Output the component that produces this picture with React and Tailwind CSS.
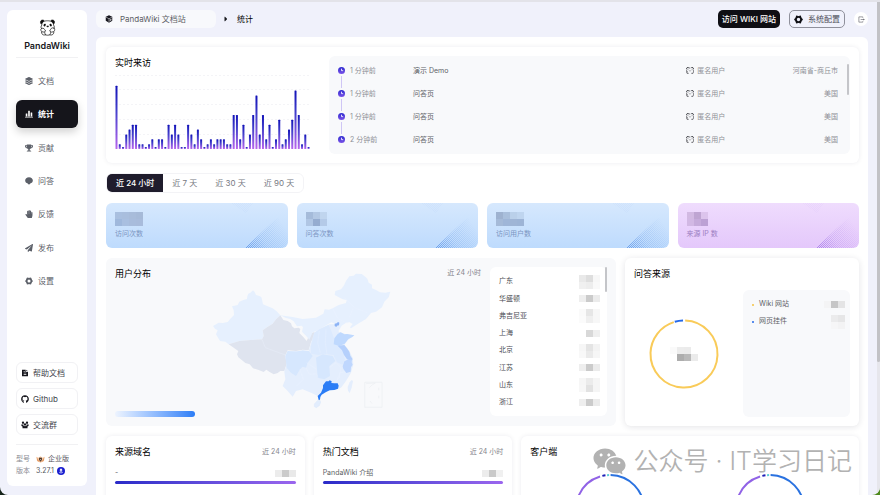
import clsx from 'clsx'
import {
  FaLayerGroup,
  FaTrophy,
  FaHandPaper,
  FaPaperPlane,
  FaGithub,
  FaCaretRight,
} from 'react-icons/fa'
import { RiFileTextFill, RiWechatFill } from 'react-icons/ri'

function StatsIcon({ className }) {
  return (
    <svg viewBox="0 0 16 16" className={className} fill="currentColor">
      <rect x="1.5" y="7" width="3.2" height="6" rx="0.6" />
      <rect x="6.4" y="1.5" width="3.2" height="11.5" rx="0.6" />
      <rect x="11.3" y="5" width="3.2" height="8" rx="0.6" />
      <rect x="0" y="13.6" width="16" height="1.6" rx="0.8" />
    </svg>
  )
}

function BubbleIcon({ className }) {
  return (
    <svg viewBox="0 0 16 16" className={className} fill="currentColor">
      <path d="M8 0.500c4.500 0 7.700 2.700 7.700 6.500 0 3-2.200 5.300-5.200 6L8 15.700 5.500 13C2.500 12.300.3 10 .3 7 .3 3.200 3.500.5 8 .5z" />
    </svg>
  )
}

function GearIcon({ className }) {
  return (
    <svg viewBox="0 0 24 24" className={className} fill="none" stroke="currentColor">
      <circle cx="12" cy="12" r="7" strokeWidth="5" />
      <g fill="currentColor" stroke="none">
        <circle cx="21" cy="12" r="2.600" />
        <circle cx="3" cy="12" r="2.600" />
        <circle cx="16.500" cy="19.800" r="2.600" />
        <circle cx="7.500" cy="19.800" r="2.600" />
        <circle cx="16.500" cy="4.200" r="2.600" />
        <circle cx="7.500" cy="4.200" r="2.600" />
      </g>
    </svg>
  )
}

function ExitIcon({ className }) {
  return (
    <svg viewBox="0 0 16 16" className={className} fill="none" stroke="currentColor" strokeWidth="1.500">
      <path d="M11 4V2H2v12h9v-2" />
      <path d="M6 8h8" />
      <path d="M12 5.500L15.500 8 12 10.500z" fill="currentColor" stroke="none" />
    </svg>
  )
}

function PandaIcon({ className }) {
  return (
    <svg viewBox="0 0 48 48" className={className} fill="none" stroke="#111" strokeWidth="2">
      <path d="M8 17C7 9 14 5 24 5s18 4 17 12c3 4 3 8 0 11" />
      <path d="M8 17c-3 4-3 8 0 11" />
      <path d="M5 13C2 6 7 1 14 4l-2 4c-3 1-4 4-5 6zM43 12c3-7-3-11-9-8l2 4c3 1 4 3 5 6z" fill="#111" />
      <ellipse cx="16" cy="17" rx="3" ry="4" transform="rotate(30 16 17)" fill="#111" stroke="none" />
      <ellipse cx="33" cy="17" rx="3" ry="4" transform="rotate(-30 33 17)" fill="#111" stroke="none" />
      <path d="M22 20h5l-2.500 3z" fill="#111" />
      <path d="M5 29c3-4 9-4 11 1l3 4-5 3-6-1c-2-2-3-4-3-7zM44 27c-3-3-9-3-11 2l-3 5 5 3 6-1c3-2 4-5 3-9z" />
      <path d="M7 36c0 5 2 8 6 9h6c-2-3-3-5-3-8M42 35c0 6-2 9-6 10h-6c2-3 3-5 3-8M19 45c3 1 8 1 11 0" />
    </svg>
  )
}

function VisitorIcon({ className }) {
  return (
    <svg viewBox="0 0 24 21" className={className} fill="none" stroke="#33343a" strokeWidth="2">
      <path d="M2 6C1 2 5 0 8 2M22 6c1-4-3-6-6-4" strokeWidth="3" />
      <path d="M8 3h5M3 7c-2 4-2 8 0 12h5M21 7c2 4 2 8 0 12h-5" />
      <path d="M7 8l2 2M17 8l-2 2M11 12h2M3 14l3 1" />
    </svg>
  )
}

function CubeIcon({ className }) {
  return (
    <svg viewBox="0 0 16 16" className={className}>
      <path d="M8 0.500l6.500 3.200v8L8 15.500l-6.500-3.800v-8z" fill="#16161d" />
      <path d="M8 7.500v7.500M8 7.500L2 4.300M8 7.500l6-3.200" stroke="#fff" strokeWidth="1" />
      <path d="M9.500 9l3.500-1.800v3.500L9.500 12.600z" fill="#fff" opacity="0.7" />
    </svg>
  )
}

function GroupIcon({ className }) {
  return (
    <svg viewBox="0 0 16 16" className={className} fill="#16161d">
      <circle cx="4" cy="3.500" r="2.300" />
      <circle cx="12" cy="3.500" r="2.300" />
      <circle cx="8" cy="6.800" r="2.400" />
      <path d="M0.500 7h3.800c0 2 1.500 3.500 3.700 3.500S11.700 9 11.700 7h3.800c0 2.500-1 3.500-2.500 4v3.500H3V11C1.500 10.500.5 9.500.5 7z" />
    </svg>
  )
}

function CrownIcon({ className }) {
  return (
    <svg viewBox="0 0 27 21" className={className}>
      <path d="M1 2l7 3 5.500-4L19 5l7-3-2 13-10.500 5L3 15z" fill="#f6c9a4" />
      <path d="M2 4l7 10 3 4-8-3z" fill="#e39a63" />
      <path d="M25 4l-7 10-3 4 8-3z" fill="#e39a63" />
      <path d="M9 5.500h9v6L13.500 17 9 11.500z" fill="#3b2417" />
      <path d="M11.500 8l2 4.500 2-4.500" stroke="#fff" strokeWidth="1.500" fill="none" />
    </svg>
  )
}

function UpdateIcon({ className }) {
  return (
    <svg viewBox="0 0 22 22" className={className}>
      <circle cx="11" cy="11" r="11" fill="#1a1fd0" />
      <path d="M11 3.500l4.500 5.500h-2.500v4h-4V9H6.500z" fill="#fff" />
      <path d="M6 14c2 3 8 3 10 0" stroke="#fff" strokeWidth="2" fill="none" />
    </svg>
  )
}

function ClockIcon({ className }) {
  return (
    <svg viewBox="0 0 21 21" className={className}>
      <defs>
        <linearGradient id="clock" x1="0" y1="0" x2="0" y2="1">
          <stop offset="0" stopColor="#2f2cd0" />
          <stop offset="1" stopColor="#7a52e8" />
        </linearGradient>
      </defs>
      <circle cx="10.500" cy="10.500" r="10.500" fill="url(#clock)" />
      <path d="M10.500 5v6h5" stroke="#fff" strokeWidth="2.500" fill="none" />
    </svg>
  )
}

const NAV = [
  { label: '文档', icon: FaLayerGroup },
  { label: '统计', icon: StatsIcon, active: true },
  { label: '贡献', icon: FaTrophy },
  { label: '问答', icon: BubbleIcon },
  { label: '反馈', icon: FaHandPaper },
  { label: '发布', icon: FaPaperPlane },
  { label: '设置', icon: GearIcon },
]

const LINKS = [
  { label: '帮助文档', icon: RiFileTextFill },
  { label: 'Github', icon: FaGithub },
  { label: '交流群', icon: GroupIcon },
]

const VISITS = [
  { time: '1 分钟前', page: '演示 Demo', place: '河南省-商丘市' },
  { time: '1 分钟前', page: '问答页', place: '美国' },
  { time: '1 分钟前', page: '问答页', place: '美国' },
  { time: '2 分钟前', page: '问答页', place: '美国' },
]

const TRAFFIC = [
  13, 1, 0, 3, 4, 5, 5, 1, 1, 0, 1, 2, 0, 2, 2, 0, 5, 3, 5, 3, 0, 0, 5, 3, 1, 4, 2, 0, 1, 2,
  1, 2, 2, 2, 1, 1, 7, 7, 2, 5, 0, 3, 7, 11, 3, 7, 2, 5, 0, 2, 6, 1, 2, 4, 6, 12, 7, 1, 3, 0,
]

const WIDE = [['#e9e9e9', '#dedede', '#f7f7f7'], ['#f0f0f0', '#ededed', '#f9f9f9']]
const SLIM = [['#eeeeee', '#cbcbcb', '#ebebeb']]
const TALL = [['#fafafa', '#e6e6e6', '#f7f7f7'], ['#fbfbfb', '#efefef', '#f7f7f7']]

const REGIONS = [
  { name: '广东', mask: WIDE },
  { name: '华盛顿', mask: SLIM },
  { name: '弗吉尼亚', mask: TALL },
  { name: '上海', mask: [['#ffffff', '#d8d8d8', '#efefef']] },
  { name: '北京', mask: [['#f6f6f6', '#e4e4e4', '#f3f3f3'], ['#f8f8f8', '#eaeaea', '#f6f6f6']] },
  { name: '江苏', mask: SLIM },
  { name: '山东', mask: [['#f6f6f6', '#ebebeb', '#f5f5f5'], ['#f7f7f7', '#e2e2e2', '#f5f5f5']] },
  { name: '浙江', mask: SLIM },
]

const STATS = [
  {
    label: '访问次数',
    mask: [['#a9bfdf', '#a9bedd', '#a8bcda', '#a6bad8'], ['#9fb8dc', '#a9bfe0', '#a8bcdc', '#a8bbdb']],
  },
  {
    label: '问答次数',
    mask: [['#a5bbda', '#b3c8e4', '#c0d5ee'], ['#b0c6e4', '#95acd0', '#b4cae8']],
  },
  {
    label: '访问用户数',
    mask: [['#9eb2d0', '#a9bfdc', '#bad0ea', '#bfd5ef'], ['#a5bad8', '#9fb6d8', '#9fb5d6', '#9db4d6']],
  },
  {
    label: '来源 IP 数',
    mask: [['#d2b9e2', '#bfa5d2', '#dcc4ec'], ['#d2b8e4', '#c6abdb', '#bca1d4']],
    purple: true,
  },
]

// Pixelated cover for hidden figures
function Mosaic({ rows }) {
  return (
    <span aria-hidden="true" className="flex flex-col">
      {rows.map((row, i) => (
        <span key={i} className="flex">
          {row.map((color, j) => (
            <span key={j} className="w-[7px] h-[7px]" style={{ backgroundColor: color }} />
          ))}
        </span>
      ))}
    </span>
  )
}

function Card({ className, children }) {
  return (
    <section className={clsx('rounded-md bg-white shadow-[0_0_5px_rgba(30,30,60,0.08)]', className)}>
      {children}
    </section>
  )
}

function Title({ children }) {
  return <h2 className="text-[9px] leading-[14px] font-normal text-black whitespace-nowrap">{children}</h2>
}

function Period() {
  return <span className="text-[7px] leading-3 text-[#85858c] whitespace-nowrap">近 24 小时</span>
}

function Sidebar() {
  return (
    <aside className="w-20 shrink-0 mt-2 mb-[9px] rounded-md bg-white px-[9px] flex flex-col">
      <div className="pt-[9px] pb-[5px] border-b border-[#f1f1f3] flex flex-col items-center">
        <PandaIcon className="w-[17px] h-[17px]" />
        <span className="mt-1 text-[9px] leading-3 font-semibold text-[#17171c]">PandaWiki</span>
      </div>
      <nav className="mt-[9px] h-[228px] flex flex-col justify-between">
        {NAV.map(({ label, icon: Icon, active }) => (
          <a
            key={label}
            href="#"
            className={clsx(
              'h-7 pl-[9px] rounded-md flex items-center gap-[5px] text-[8px]',
              active
                ? 'bg-[#15151b] text-white font-bold shadow-[0_4px_8px_rgba(0,0,0,0.18)]'
                : 'text-[#5c6069]'
            )}
          >
            <Icon className="w-2 h-2" />
            {label}
          </a>
        ))}
      </nav>
      <div className="mt-auto flex flex-col gap-[5px]">
        {LINKS.map(({ label, icon: Icon }) => (
          <a
            key={label}
            href="#"
            className="h-[21px] pl-1 rounded-md border border-[#f1f1f4] flex items-center gap-1 text-[8px] text-[#43454c]"
          >
            <Icon className="w-2 h-2 text-[#16161d]" />
            {label}
          </a>
        ))}
      </div>
      <dl className="mt-[9px] pt-[8px] pb-[9px] border-t border-[#f1f1f3] text-[7px] leading-3 text-[#55575e]">
        <div className="flex items-center">
          <dt className="w-5 text-[#8b8d94]">型号</dt>
          <dd className="flex items-center gap-[3px]">
            <CrownIcon className="w-[9px] h-[7px]" />
            企业版
          </dd>
        </div>
        <div className="flex items-center">
          <dt className="w-5 text-[#8b8d94]">版本</dt>
          <dd className="flex items-center gap-[3px]">
            3.27.1
            <UpdateIcon className="w-2 h-2" />
          </dd>
        </div>
      </dl>
    </aside>
  )
}

function Header() {
  return (
    <header className="flex items-center h-[18px]">
      <a
        href="#"
        className="w-[120px] h-full pl-[9px] rounded-md bg-[#f8f9fc] flex items-center gap-[7px] text-[8px] text-[#5c5e66]"
      >
        <CubeIcon className="w-2 h-2" />
        PandaWiki 文档站
      </a>
      <FaCaretRight className="ml-[7px] w-[6px] h-2 text-[#17171c]" />
      <span className="ml-2 text-[8px] text-black">统计</span>
      <div className="ml-auto flex items-center gap-[9px]">
        <button className="h-[18px] px-1 rounded-[5px] bg-[#0f0f14] text-white text-[8px] font-medium">
          访问 WIKI 网站
        </button>
        <button className="h-[18px] px-1 rounded-[5px] border border-[#8f909b] flex items-center gap-[5px] text-[8px] text-[#4c4e58]">
          <GearIcon className="w-[9px] h-[9px] text-[#0f0f14]" />
          系统配置
        </button>
        <button aria-label="退出" className="w-[14px] h-[14px] rounded-full bg-white flex items-center justify-center">
          <ExitIcon className="w-[7px] h-[7px] text-[#6a6a72]" />
        </button>
      </div>
    </header>
  )
}

function TrafficChart() {
  return (
    <svg viewBox="0 0 195 75" className="block w-full h-[75px]">
      <defs>
        <linearGradient id="bar" x1="0" y1="0" x2="0" y2="1">
          <stop offset="0" stopColor="#1212b8" />
          <stop offset="0.4" stopColor="#4440cc" />
          <stop offset="1" stopColor="#b866ee" />
        </linearGradient>
      </defs>
      {[1, 15, 30, 45, 60].map((y) => (
        <line key={y} x1="0" x2="195" y1={y + 0.5} y2={y + 0.5} stroke="#f4f4f7" strokeDasharray="2 2" />
      ))}
      {TRAFFIC.map((v, i) => {
        const h = v ? v * 4.87 : 2
        return <rect key={i} x={0.5 + i * 3.255} y={75 - h} width="2" height={h} rx="0.5" fill="url(#bar)" />
      })}
    </svg>
  )
}

function Realtime() {
  return (
    <Card className="p-[9px] flex gap-[19px]">
      <div className="w-[195px] shrink-0 flex flex-col">
        <Title>实时来访</Title>
        <div className="mt-1">
          <TrafficChart />
        </div>
      </div>
      <div className="flex-1 rounded-md bg-[#f8f9fb] flex justify-between h-[98px]">
        <ol className="flex-1 pl-[9px] pt-[11px] text-[7px] leading-[7px] overflow-hidden">
          {VISITS.map((v, i) => (
            <li key={i} className="h-[23px] grid grid-cols-[75px_9fr_5fr] text-[#8e9096]">
              <div className="flex gap-[5px]">
                <div className="w-[7px] flex flex-col items-center">
                  <ClockIcon className="w-[7px] h-[7px]" />
                  {i < VISITS.length - 1 && <span className="mt-[2px] w-px h-3 bg-[#cfc6f5]" />}
                </div>
                <time>{v.time}</time>
              </div>
              <span className="text-[#5d5f66]">{v.page}</span>
              <div className="flex justify-between">
                <span className="flex gap-[3px]">
                  <VisitorIcon className="w-2 h-[7px]" />
                  匿名用户
                </span>
                <span>{v.place}</span>
              </div>
            </li>
          ))}
        </ol>
        <div className="w-3 pt-2 pr-px flex justify-end">
          <div className="w-[2px] h-[31px] rounded-full bg-[#c4c5c9]" />
        </div>
      </div>
    </Card>
  )
}

function Tabs() {
  return (
    <div className="self-start h-5 rounded-md border border-[#f3f3f6] overflow-hidden flex text-[8px] text-[#76787f]">
      <button className="px-[9px] bg-[#1f1c2c] text-white font-medium">近 24 小时</button>
      <button className="px-[9px]">近 7 天</button>
      <button className="px-[9px]">近 30 天</button>
      <button className="px-[9px]">近 90 天</button>
    </div>
  )
}

function StatCard({ label, mask, purple }) {
  const id = purple ? 'dots-purple' : 'dots-blue'
  return (
    <section
      className={clsx(
        'relative h-[45px] rounded-md overflow-hidden px-[9px] pt-[9px] bg-linear-to-b',
        purple ? 'from-[#efdcfd] to-[#e4c8fb] text-[#9c80c2]' : 'from-[#d6e8fd] to-[#bedbfd] text-[#7b95c2]'
      )}
    >
      <svg viewBox="0 0 60 45" className="absolute right-0 bottom-0 w-[60px] h-[45px]">
        <defs>
          <pattern id={id} width="2" height="2" patternUnits="userSpaceOnUse">
            <path d="M0 0h1v1H0zM1 1h1v1H1z" fill={purple ? '#a077e8' : '#5b93e6'} />
          </pattern>
          <linearGradient id={id + '-fade'} x1="0" y1="0.8" x2="1" y2="0.3">
            <stop offset="0" stopColor="#fff" stopOpacity="0.8" />
            <stop offset="0.35" stopColor="#fff" stopOpacity="0.3" />
            <stop offset="0.9" stopColor="#fff" stopOpacity="0" />
          </linearGradient>
          <mask id={id + '-mask'}>
            <path d="M17 45L54 10l6 10v25z" fill={`url(#${id}-fade)`} />
            <path d="M3 0h22l-7 10z" fill="#fff" opacity="0.05" />
          </mask>
        </defs>
        <rect width="60" height="45" fill={`url(#${id})`} mask={`url(#${id}-mask)`} />
      </svg>
      <Mosaic rows={mask} />
      <p className="mt-[3px] text-[7px] leading-[10px]">{label}</p>
    </section>
  )
}

function ChinaMap() {
  return (
    <svg viewBox="335 50 546 420" className="w-[182px] h-[140px]" role="img" aria-label="用户分布" strokeLinejoin="round">
      <path
        fill="#e6f0fe"
        d="M341 215l17-10 12 1 15-3 8-10 11-11-1-14-5-12 17-4 5-10 12-5 11-3 1-9 3-7 6-3 8-7 5 5 4 9 10 3 6 3 3 12 2 10 14 6 15 6 12 9 11 12-13 12-10 13-16 10-14 10 3 17-5 10-34 2-34 3-32 10-10-8-16-2-6-10-6-10 5-12-8-5z"
      />
      <path
        fill="#dfe4ef"
        d="M388 270l32-10 34-3 34-2 5-10-3-17 14-10 16-10 10-13 13-12 9 14 13 3 10 7 3 9 7 6 13-2 5 4-3 12 12 12 10 12 10-22 13-5 3 10-13 20-7 25-18-2-20 4-25-2-7 15 4 25-7 22-12 0-8 6-12 4-12-7-10-7-8 7-17-7-15-4-10-12-13-4-8-7-13-10-4-9 4-10z"
      />
      <path
        fill="#e6f0fe"
        d="M543 183l37 5 30 6 40-4 22-12 4-13 13 1 11-4 18-10 22-6 2-9-12-2-24-13 2-12 17-5 8-10 7-15 10-14 13-2 7-6 17 1 8 6 9 8 4 12 10 6 0 11 12 5 12 7 16 1 15-3-5 17-13 13-7 17-18 13-15 4-15 18-25 15-20 13-3-3 8-10-9-5-11 1-13 9-7 12-10-16-14-6-20 12-23 13-13 5-10 22-10-12-12-12 3-14-5-4-13 2-10-15-10-7-13-3z"
      />
      <path
        fill="#e4eefd"
        d="M645 235l15-10 30-15 30 0-2 22 22 8 25 3-20 15-10 14 15 18 10 20 2 20-7 25-15 25-15 20-9 4-36 6-25 15-20-10-25-10-20 5-10 17-15-17-15-15 8-20-3-23 7-22-4-25 7-15 63 0 7-25z"
      />
      <path
        fill="#d6e7fe"
        d="M558 305l7-15 25 2 20-4 18 2 12 15-15 20-5 15-10-3-8 8-12 20-15-10-13-15zM650 310l20-10 30 5 8 15-18 15 2 30-17 10-20-5-2-25z"
      />
      <path fill="#dceafe" d="M645 235l15-10 28-13 8 18 9 25 18 20-4 22-14 6-30-5-18 4-22-4 0-23z" />
      <path fill="#dceafe" d="M703 275l18-1 10 20 6 22-8 15-16-7-9-18z" />
      <path fill="#bfd9fe" d="M703 270l2-18 10-13 9-5 11 6 8-1 22 4-6 5-12 6-11 14-16 7z" />
      <path fill="#b5d0fc" d="M715 274l20-2 8 10 7 10 3 12 7 11-6 4-11-4-9-13-6-14z" />
      <path fill="#bfd7fe" d="M735 321l9-5 14 0-1 8 3 7-5 8-1 13-13 4-9-12-2-8z" />
      <path fill="#8cb3f5" d="M706 208l6-1 4-4 4 2-1 8-6 1-2 4-5-3z" />
      <path
        fill="#2b7df6"
        d="M676 386l4-5 8 0 3-3 6 3-1 5 9 1 10 0 3 7-2 9-11 4-14 1-12 6-12 7-4 7-1 8-4 1-3-12 10-10 6-14 0-8z"
      />
      <path fill="#e2edfd" stroke="#d5e3f8" d="M645 449l9-10 8-1 2 6-4 10-9 6-6-3z" />
      <path fill="#e4eefd" d="M745 398l6-14 6-7 4 3-4 20-6 16-5-7z" />
      <g fill="none" stroke="#eef4fe" strokeWidth="1">
        <path d="M620 340l10 20 22-2 4 12M602 345l10 30-20 20M652 345l-30-20M690 340l20-15 15 15-5 30-15 15M710 385l12-30 14-2M660 230l-5 35 8 30M680 225l-2 40 5 35M488 255l10 25 60 22M700 162l15 30 30 15M735 130l30 30 40 15M762 160l-12 30" />
      </g>
      <g fill="none" stroke="#eceef2" strokeWidth="2">
        <rect x="796" y="384" width="52" height="75" />
        <path d="M800 388l28-2-10 6-8 8M838 400v8M838 424v8M812 440l6 8" />
      </g>
    </svg>
  )
}

function UserMap() {
  return (
    <section className="flex-1 rounded-md bg-[#f8f9fb] p-[9px] flex gap-[9px]">
      <div className="flex-1 flex flex-col">
        <div className="flex items-start justify-between">
          <Title>用户分布</Title>
          <div className="pl-[5px] pt-1">
            <ChinaMap />
          </div>
          <Period />
        </div>
        <div className="mt-auto w-20 h-[6px] rounded-sm bg-linear-to-r from-[#eef4fe] to-[#2b7df6]" />
      </div>
      <div className="w-[117px] h-[149px] rounded-md bg-white flex">
        <ul className="flex-1 h-[138px] mt-[6px] pl-[9px] pr-[5px] flex flex-col justify-between text-[7px] text-[#4b4d54]">
          {REGIONS.map((r) => (
            <li key={r.name} className="h-[17px] flex items-center justify-between">
              {r.name}
              <Mosaic rows={r.mask} />
            </li>
          ))}
        </ul>
        <div className="w-[2px] h-[25px] rounded-full bg-[#c4c5c9]" />
      </div>
    </section>
  )
}

function SourceCard() {
  return (
    <Card className="w-[234px] shrink-0 p-[9px] flex flex-col shadow-[0_1px_6px_rgba(30,30,60,0.12)]">
      <Title>问答来源</Title>
      <div className="mt-[9px] flex gap-[9px] flex-1">
        <div className="flex-1 flex items-center justify-center relative">
          <svg viewBox="0 0 70 70" className="w-[70px] h-[70px]" fill="none" strokeWidth="2">
            <circle cx="35" cy="35" r="33.500" stroke="#f9cb59" pathLength="100" strokeDasharray="94.500 5.500" transform="rotate(-88 35 35)" />
            <circle cx="35" cy="35" r="33.500" stroke="#2468e8" pathLength="100" strokeDasharray="4 96" transform="rotate(-106 35 35)" />
          </svg>
          <div className="absolute inset-0 flex items-center justify-center">
            <Mosaic rows={[['#fafafa', '#ececec', '#ebebeb', '#ffffff'], ['#ffffff', '#adadad', '#b9b9b9', '#ebebeb']]} />
          </div>
        </div>
        <ul className="w-[107px] rounded-md bg-[#f8f9fb] pt-[6px] pl-[9px] pr-[5px] text-[7px] text-[#5d5f66]">
          <li className="h-[17px] flex items-center gap-[5px]">
            <span className="w-[2px] h-[2px] rounded-full bg-[#f5c242]" />
            Wiki 网站
            <span className="ml-auto">
              <Mosaic rows={[['#f4f4f5', '#c6c6c7', '#e4e4e5']]} />
            </span>
          </li>
          <li className="h-[17px] flex items-center gap-[5px]">
            <span className="w-[2px] h-[2px] rounded-full bg-[#2468e8]" />
            网页挂件
            <span className="ml-auto">
              <Mosaic rows={[['#ebebec', '#e6e6e7'], ['#f6f6f7', '#f3f3f4']]} />
            </span>
          </li>
        </ul>
      </div>
    </Card>
  )
}

function RankCard({ title, name, mask }) {
  return (
    <Card className="p-[9px] h-[120px]">
      <div className="flex items-center justify-between">
        <Title>{title}</Title>
        <Period />
      </div>
      <div className="mt-2 flex items-center justify-between text-[7px] leading-3 text-[#5d5f66]">
        {name}
        <Mosaic rows={mask} />
      </div>
      <div className="mt-[2px] h-[3px] rounded-full bg-linear-to-r from-[#2a2ac8] to-[#9b66ee]" />
    </Card>
  )
}

function ClientRing() {
  return (
    <svg viewBox="0 0 70 70" className="w-[70px] h-[70px]" fill="none" strokeWidth="2">
      <circle cx="35" cy="35" r="34" stroke="#2a72e0" pathLength="100" strokeDasharray="55 45" transform="rotate(-89 35 35)" />
      <circle cx="35" cy="35" r="34" stroke="#9163e6" pathLength="100" strokeDasharray="40 60" transform="rotate(109 35 35)" />
      <circle cx="35" cy="35" r="34" stroke="#2020b8" pathLength="100" strokeDasharray="1.500 98.500" transform="rotate(-103 35 35)" />
      <circle cx="35" cy="35" r="34" stroke="#5fcfd8" pathLength="100" strokeDasharray="1 99" transform="rotate(-95 35 35)" />
    </svg>
  )
}

function Watermark() {
  return (
    <div className="absolute right-7 bottom-4 flex items-center gap-[6px] text-[#b2b2b2] whitespace-nowrap">
      <RiWechatFill className="w-[35px] h-[35px]" />
      <span className="text-[25px] leading-9 font-[350]">公众号 · IT学习日记</span>
    </div>
  )
}

export default function App() {
  return (
    <div className="h-screen overflow-hidden bg-linear-to-r from-[#16241a] to-[#4f8a1c] font-[Inter,'Noto_Sans_CJK_SC',sans-serif]">
      <div className="relative h-full rounded-b-lg overflow-hidden bg-[#f0f1fb] border-t-2 border-[#e3e3e9] flex">
        <div className="flex-1 min-w-0 pl-[7px] pr-[9px] flex gap-[9px]">
          <Sidebar />
          <div className="flex-1 min-w-0 pt-2 flex flex-col gap-[9px]">
            <Header />
            <main className="flex-1 min-h-0 overflow-hidden rounded-t-md bg-white pl-[10px] pr-[9px] pt-[10px] flex flex-col gap-[10px] *:shrink-0">
              <Realtime />
              <Tabs />
              <div className="grid grid-cols-4 gap-[9px]">
                {STATS.map((s) => (
                  <StatCard key={s.label} {...s} />
                ))}
              </div>
              <div className="flex gap-[9px]">
                <UserMap />
                <SourceCard />
              </div>
              <div className="grid grid-cols-[10fr_10fr_17fr] gap-[9px]">
                <RankCard title="来源域名" name="-" mask={[['#ececec', '#cbcbcb', '#e9e9e9']]} />
                <RankCard title="热门文档" name="PandaWiki 介绍" mask={[['#ececec', '#c9c9c9', '#f0f0f0']]} />
                <Card className="p-[9px] h-[120px]">
                  <Title>客户端</Title>
                  <div className="mt-[15px] grid grid-cols-2 justify-items-center">
                    <ClientRing />
                    <ClientRing />
                  </div>
                </Card>
              </div>
            </main>
          </div>
        </div>
        <div className="w-[3px] bg-[#e6e6ec]">
          <div className="h-[73%] bg-[#c2c2c6] rounded-b-full" />
        </div>
        <Watermark />
      </div>
    </div>
  )
}
